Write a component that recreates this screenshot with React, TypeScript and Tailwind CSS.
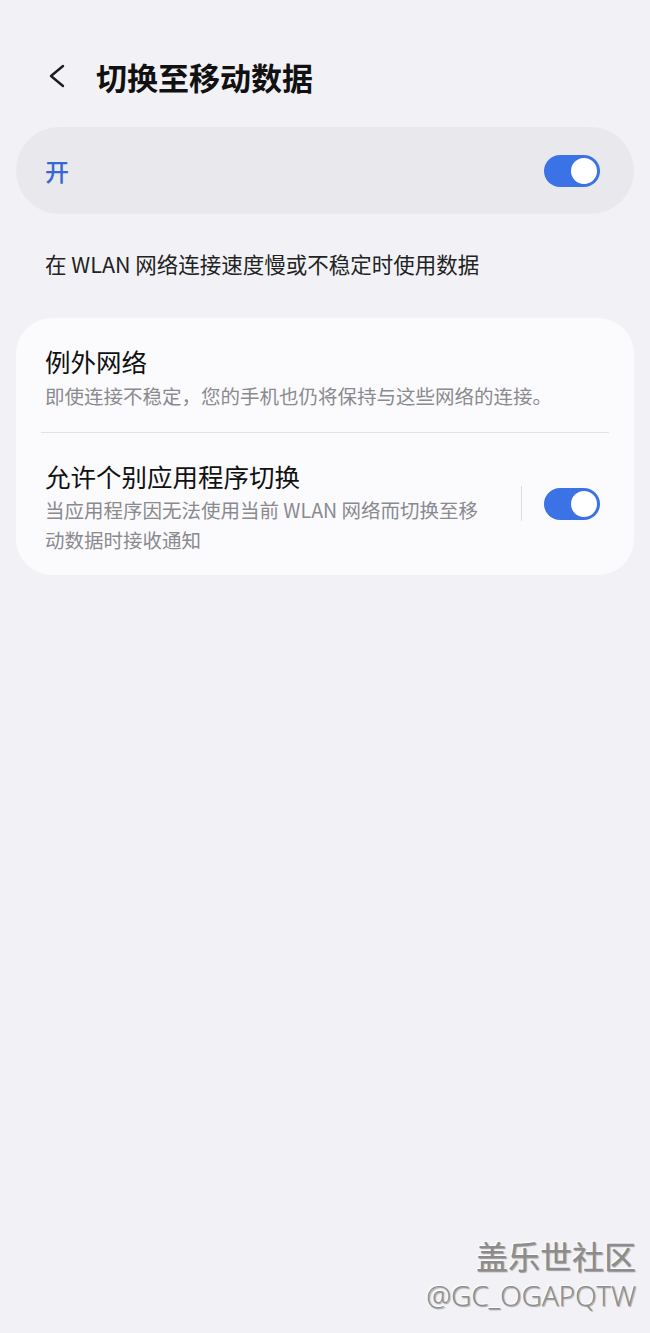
import React from 'react';

const font = { fontFamily: '"Noto Sans CJK SC", "Noto Sans", sans-serif' };

function Toggle() {
  return (
    <div className="flex h-[32px] w-[56px] flex-shrink-0 items-center justify-end rounded-full bg-[#3b73e6] px-[3px]">
      <div className="h-[26px] w-[26px] rounded-full bg-white" />
    </div>
  );
}

export default function App() {
  return (
    <div
      className="relative min-h-[1333px] w-[650px] overflow-hidden bg-[#f2f2f6] text-[#111]"
      style={font}
    >
      {/* Header */}
      <div className="mt-[48px] flex h-[56px] items-center">
        <div className="ml-[44px] flex h-[24px] w-[24px] items-center justify-center">
          <svg width="20" height="24" viewBox="0 0 20 24" fill="none">
            <path d="M17 2 L5 12 L17 22" stroke="#1c1c1c" strokeWidth="2.4" strokeLinecap="round" strokeLinejoin="round" />
          </svg>
        </div>
        <h1 className="ml-[28px] text-[31px] leading-none font-bold">切换至移动数据</h1>
      </div>

      {/* Master switch */}
      <div className="mx-4 mt-[23px] flex h-[87px] items-center justify-between rounded-full bg-[#e8e8ed] pl-[29px] pr-[34px]">
        <span className="text-[24px] font-medium text-[#3568d4]">开</span>
        <Toggle />
      </div>

      <p className="mt-[35px] px-[45px] text-[21.5px] leading-[30px] text-[#222]">
        在 WLAN 网络连接速度慢或不稳定时使用数据
      </p>

      {/* Options card */}
      <div className="mx-4 mt-[39px] rounded-[36px] bg-[#fbfbfd] pt-[27px] pb-[20px]">
        <div className="px-[29px] pb-[21px]">
          <div className="text-[25.5px] leading-[32px]">例外网络</div>
          <div className="mt-1 text-[19.5px] leading-[30px] text-[#8a8a8f]">
            即使连接不稳定，您的手机也仍将保持与这些网络的连接。
          </div>
        </div>
        <div className="mx-[25px] h-px bg-[#e2e2e6]" />
        <div className="flex items-center pt-[27px] pl-[29px] pr-[34px]">
          <div className="w-[470px]">
            <div className="text-[25.5px] leading-[32px]">允许个别应用程序切换</div>
            <div className="mt-[3px] text-[19.5px] leading-[30px] text-[#8a8a8f]">
              当应用程序因无法使用当前 WLAN 网络而切换至移
              <br />
              动数据时接收通知
            </div>
          </div>
          <div className="flex flex-1 items-center justify-end gap-[22px] self-start pt-[26px]">
            <div className="h-[35px] w-px bg-[#dcdce0]" />
            <Toggle />
          </div>
        </div>
      </div>

      {/* Watermark */}
      <div className="absolute right-[14px] bottom-[20px] flex flex-col items-end">
        <span className="text-[32px] leading-[36px] text-[#8c8c8c] [text-shadow:1px_1px_1px_rgba(0,0,0,0.35),-1px_-1px_0_rgba(255,255,255,0.9)]">
          盖乐世社区
        </span>
        <span
          className="mt-[4px] text-[28px] leading-[36px] font-light text-[#8c8c8c] [text-shadow:1px_1px_1px_rgba(0,0,0,0.35),-1px_-1px_0_rgba(255,255,255,0.9)]"
          style={{ fontFamily: '"Open Sans", "Noto Sans", sans-serif' }}
        >
          @GC_OGAPQTW
        </span>
      </div>
    </div>
  );
}
